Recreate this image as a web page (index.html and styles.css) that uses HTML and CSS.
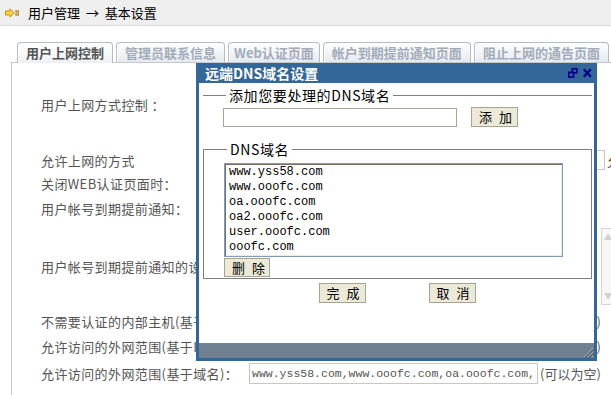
FILE: index.html
```html
<!DOCTYPE html>
<html lang="zh-CN">
<head>
  <meta charset="UTF-8">
  <title>基本设置</title>
  <link rel="stylesheet" href="styles.css">
</head>
<body>
  <!-- Breadcrumb -->
  <div class="crumb">
    <svg width="14" height="10" viewBox="0 0 14 10">
      <path d="M0.5 3 H5 V0.8 L9 5 L5 9.2 V7 H0.5 Z" fill="#ffd84a" stroke="#d98b00" stroke-width="1"/>
      <rect x="10.5" y="2" width="1.2" height="6" fill="#b07800"/>
      <rect x="12.6" y="2" width="1.2" height="6" fill="#b07800"/>
    </svg>
    <span>用户管理 <span class="to">→</span> 基本设置</span>
  </div>

  <!-- Tabs -->
  <div class="tabs">
    <span class="tab on">用户上网控制</span>
    <span class="tab">管理员联系信息</span>
    <span class="tab narrow">Web认证页面</span>
    <span class="tab">帐户到期提前通知页面</span>
    <span class="tab">阻止上网的通告页面</span>
  </div>

  <!-- Settings panel -->
  <div class="panel">
    <div class="row r1"><span class="lbl">用户上网方式控制 ：</span></div>
    <div class="row r2">
      <span class="lbl">允许上网的方式</span>
      <span class="sel"></span><span class="opt">允许</span>
    </div>
    <div class="row r3"><span class="lbl">关闭WEB认证页面时：</span></div>
    <div class="row r4"><span class="lbl">用户帐号到期提前通知：</span></div>
    <div class="row r5">
      <span class="lbl">用户帐号到期提前通知的设置：</span>
      <div class="notice">
        <span class="arrow">▲</span>
        <span class="arrow">▼</span>
      </div>
    </div>
    <div class="row r6">
      <span class="lbl">不需要认证的内部主机(基于IP)：</span>
      <input class="addr" value="">
      <span class="note">(可以为空)</span>
    </div>
    <div class="row r7">
      <span class="lbl">允许访问的外网范围(基于IP)：</span>
      <input class="addr" value="">
      <span class="note">(可以为空)</span>
    </div>
    <div class="row r8">
      <span class="lbl">允许访问的外网范围(基于域名)：</span>
      <input class="addr" value="www.yss58.com,www.ooofc.com,oa.ooofc.com,">
      <span class="note">(可以为空)</span>
    </div>
  </div>

  <!-- Floating dialog -->
  <div class="dialog">
    <div class="dlg-title">
      <span>远端DNS域名设置</span>
      <svg width="24" height="10" viewBox="0 0 24 10">
        <g fill="none" stroke="#00008b" stroke-width="1.6">
          <rect x="4.3" y="0.8" width="4.6" height="4"/>
          <rect x="0.8" y="4.3" width="4.8" height="4.8"/>
        </g>
        <path d="M15.8 1.2 L22.8 8.8 M22.8 1.2 L15.8 8.8" stroke="#00008b" stroke-width="2.2"/>
      </svg>
    </div>
    <div class="dlg-body">
      <fieldset class="add-group">
        <legend>添加您要处理的DNS域名</legend>
        <div class="add-row">
          <input class="dns-input" type="text">
          <button class="btn btn-add">添加</button>
        </div>
      </fieldset>

      <fieldset class="list-group">
        <legend>DNS域名</legend>
        <div class="dns-list">
          <div>www.yss58.com</div>
          <div>www.ooofc.com</div>
          <div>oa.ooofc.com</div>
          <div>oa2.ooofc.com</div>
          <div>user.ooofc.com</div>
          <div>ooofc.com</div>
        </div>
        <button class="btn btn-del">删除</button>
      </fieldset>

      <div class="actions">
        <button class="btn">完成</button>
        <button class="btn">取消</button>
      </div>
    </div>
    <div class="dlg-foot">
      <svg width="12" height="12" viewBox="0 0 12 12">
        <path d="M11 2 L2 11 M11 6 L6 11 M11 10 L10 11" stroke="#9aa6b2" stroke-width="1"/>
        <path d="M12 3 L3 12 M12 7 L7 12" stroke="#4e5c6a" stroke-width="1"/>
      </svg>
    </div>
  </div>
</body>
</html>
```

FILE: styles.css
```css
body {
  margin: 0;
  width: 611px;
  height: 395px;
  overflow: hidden;
  font-family: "Noto Sans CJK SC", "Liberation Sans", sans-serif;
  font-size: 13px;
  color: #555;
  background: #fff;
}

/* Breadcrumb bar */
.crumb {
  height: 25px;
  background: #efefef;
  border-bottom: 1px solid #dcdcdc;
  display: flex;
  align-items: center;
  padding-left: 5px;
  color: #000;
}

.crumb svg {
  margin-right: 9px;
}

.crumb .to {
  margin: 0 3px;
}

/* Tabs */
.tabs {
  display: flex;
  gap: 3px;
  padding: 16px 0 0 17px;
  height: 20px;
  position: relative;
  z-index: 1;
}

.tab {
  height: 19px;
  line-height: 19px;
  padding: 0 8px;
  border: 1px solid #b4bcc6;
  border-bottom: none;
  border-radius: 4px 4px 0 0;
  background: linear-gradient(#ffffff, #e4eaf0);
  box-shadow: inset 1px 1px 0 #fff;
  color: #a3acb8;
  font-weight: bold;
  white-space: nowrap;
  flex-shrink: 0;
}

.tab.narrow {
  padding: 0 5px;
}

.tab.on {
  color: #555;
  height: 20px;
  background: linear-gradient(#ffffff, #eef1f4);
}

/* Panel */
.panel {
  margin-left: 11px;
  height: 302px;
  overflow: hidden;
  border-left: 1px solid #c8c8c8;
  border-top: 1px solid #c8c8c8;
  padding-top: 30px;
}

.row {
  display: flex;
  align-items: center;
  height: 22px;
  padding-left: 29px;
  white-space: nowrap;
}

.row > * {
  flex-shrink: 0;
}

.lbl {
  width: 208px;
  letter-spacing: 0.4px;
}

.r2 { margin-top: 34px; }
.r3 { margin-top: 1px; }
.r4 { margin-top: 3px; }
.r5 { margin-top: 9px; height: 77px; }
.r6 { margin-top: 5px; }
.r7 { margin-top: 3px; }
.r8 { margin-top: 5px; }

.sel {
  margin-left: 347px;
  width: 7px;
  height: 18px;
  border: 1px solid #c8c8c8;
}

.opt {
  margin-left: 2px;
}

.notice {
  margin-left: 352px;
  width: 60px;
  height: 77px;
  box-sizing: border-box;
  border: 1px solid #d4d4d4;
  background: #f7f7f7;
  display: flex;
  flex-direction: column;
  justify-content: space-between;
  padding: 3px 0 3px 2px;
}

.arrow {
  font-size: 8px;
  line-height: 10px;
  color: #d0d0d0;
}

.addr {
  width: 289px;
  height: 21px;
  box-sizing: border-box;
  margin: 0;
  padding: 0 2px;
  border: 1px solid #c8c8c0;
  font-family: "Liberation Mono", monospace;
  font-size: 11.5px;
  color: #555;
}

.note {
  margin-left: 2px;
}

/* Dialog */
.dialog {
  position: absolute;
  left: 196px;
  top: 63px;
  width: 395px;
  height: 295px;
  padding: 0 3px 3px;
  background: #336699;
  display: flex;
  flex-direction: column;
  color: #000;
  z-index: 2;
}

.dlg-title {
  height: 20px;
  display: flex;
  align-items: center;
  justify-content: space-between;
  padding: 0 2px 0 6px;
  color: #fff;
  font-size: 14px;
  font-weight: bold;
}

.dlg-body {
  flex: 1;
  background: #fff;
  padding-top: 3px;
}

.dlg-foot {
  height: 15px;
  background: #708090;
  display: flex;
  justify-content: flex-end;
  align-items: flex-end;
}

fieldset {
  margin: 0 2px 0 4px;
  min-inline-size: auto;
}

legend {
  margin-left: 3px;
  padding: 0 3px;
  font-size: 14px;
  line-height: 18px;
  letter-spacing: 0.6px;
  color: #000;
}

.add-group {
  border: none;
  border-top: 1px solid #808080;
  padding: 3px 0 0 20px;
}

.add-row {
  display: flex;
  align-items: flex-start;
}

.dns-input {
  width: 234px;
  height: 19px;
  box-sizing: border-box;
  margin: 1px 0 0;
  border: 1px solid #a5a592;
}

.list-group {
  margin-top: 13px;
  border: 1px solid #808080;
  padding: 5px 0 1px 20px;
}

.dns-list {
  width: 339px;
  height: 94px;
  box-sizing: border-box;
  border: 1px solid #7f9db9;
  box-shadow: inset 1px 1px 0 #717171, inset -1px -1px 0 #efebde;
  padding: 1px 0 0 4px;
  font-family: "Liberation Mono", monospace;
  font-size: 12px;
  line-height: 15px;
  color: #000;
}

.btn {
  width: 47px;
  height: 20px;
  box-sizing: border-box;
  padding: 0 0 0 7px;
  border: 1px solid #a5a592;
  background: #ece9d8;
  font-family: "Noto Sans CJK SC", sans-serif;
  font-size: 13px;
  line-height: 18px;
  letter-spacing: 7px;
  color: #000;
  white-space: nowrap;
}

.btn-add {
  margin-left: 14px;
}

.btn-del {
  display: block;
  width: 46px;
  height: 19px;
  margin-top: 1px;
}

.actions {
  display: flex;
  justify-content: center;
  gap: 63px;
  margin-top: 4px;
  padding-left: 1px;
}
```
